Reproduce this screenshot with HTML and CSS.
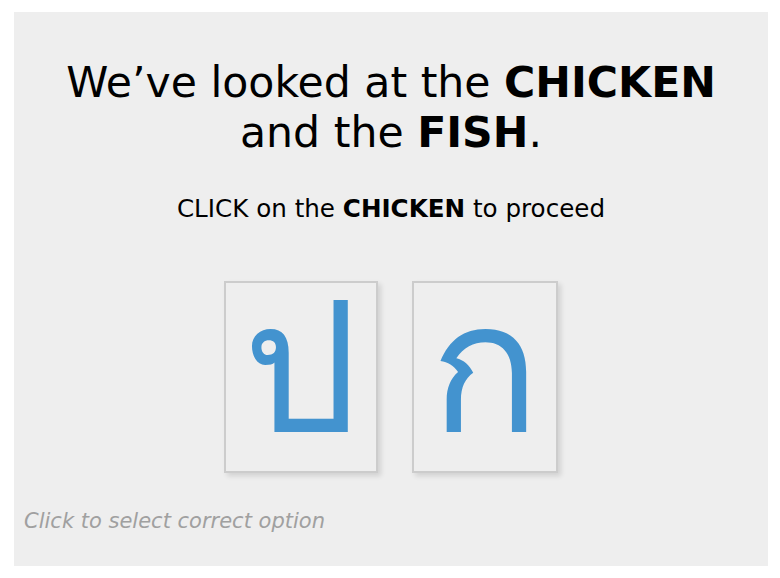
FILE: index.html
```html
<!DOCTYPE html>
<html>
<head>
<meta charset="utf-8">
<link rel="stylesheet" href="styles.css">
</head>
<body>
<main class="panel">
  <h1 class="title">We’ve looked at the <b>CHICKEN</b><br>and the <b>FISH</b>.</h1>
  <p class="prompt">CLICK on the <b>CHICKEN</b> to proceed</p>
  <div class="options">
    <button class="option option-wide">ป</button>
    <button class="option option-narrow">ก</button>
  </div>
  <p class="hint">Click to select correct option</p>
</main>
</body>
</html>
```
FILE: styles.css
```css
html, body {
  margin: 0;
  padding: 0;
  background: #ffffff;
}
body {
  padding: 12px 12px 12px 14px;
}
.panel {
  width: 754px;
  height: 554px;
  box-sizing: border-box;
  background: #eeeeee;
  font-family: "DejaVu Sans", Verdana, sans-serif;
  color: #000;
  display: flex;
  flex-direction: column;
  align-items: center;
  padding-top: 45px;
}
.title {
  margin: 0;
  font-size: 42.6px;
  line-height: 50px;
  font-weight: normal;
  text-align: center;
}
.prompt {
  margin: 37px 0 0;
  font-size: 24.6px;
  line-height: 30px;
}
.options {
  display: flex;
  gap: 34px;
  margin-top: 57px;
}
.option {
  box-sizing: border-box;
  height: 192px;
  padding: 0 0 18px;
  border: 2px solid #cccccc;
  background: #eeeeee;
  box-shadow: 3px 3px 5px rgba(0,0,0,0.12);
  color: #4393cf;
  font-size: 182px;
  font-family: "DejaVu Sans", sans-serif;
  line-height: 170px;
}
.option-wide {
  width: 154px;
}
.option-narrow {
  width: 146px;
}
.hint {
  align-self: flex-start;
  margin: 36px 0 0 10px;
  font-size: 21px;
  font-style: italic;
  color: #a0a0a0;
}
```
